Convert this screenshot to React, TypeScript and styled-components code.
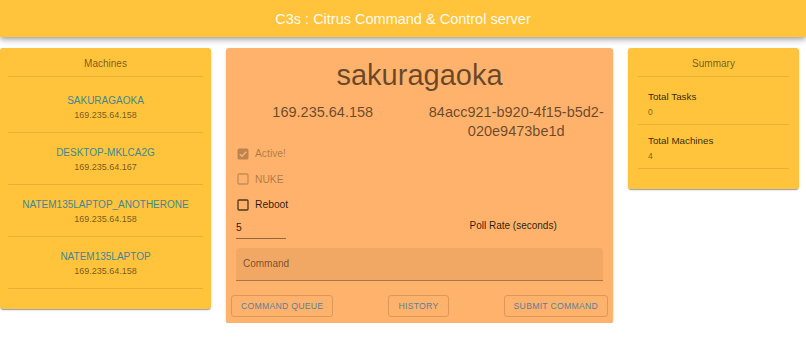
import React from 'react';
import styled, { createGlobalStyle } from 'styled-components';

const GlobalStyle = createGlobalStyle`
  *, *::before, *::after {
    box-sizing: border-box;
  }
  body {
    margin: 0;
    background: #ffffff;
    font-family: "Liberation Sans", Arial, Helvetica, sans-serif;
  }
`;

const AppBar = styled.header`
  height: 37px;
  background-color: #ffc43c;
  display: flex;
  align-items: center;
  justify-content: center;
  box-shadow: 0 2px 4px -1px rgba(0, 0, 0, 0.2), 0 4px 5px 0 rgba(0, 0, 0, 0.14),
    0 1px 10px 0 rgba(0, 0, 0, 0.12);
  color: rgba(255, 255, 255, 0.94);
  font-size: 14.5px;
`;

const Row = styled.main`
  display: flex;
  align-items: flex-start;
  padding: 11px 8px 0 0;
  gap: 15px;
`;

const Paper = styled.section<{ $bg: string; $width: number }>`
  width: ${({ $width }) => $width}px;
  flex: 0 0 auto;
  background-color: ${({ $bg }) => $bg};
  border-radius: 3px;
  box-shadow: 0 2px 1px -1px rgba(0, 0, 0, 0.2), 0 1px 1px 0 rgba(0, 0, 0, 0.14),
    0 1px 3px 0 rgba(0, 0, 0, 0.12);
`;

const SideCard = styled(Paper)<{ $inset: number }>`
  padding: 8px ${({ $inset }) => $inset}px 0;
`;

const CardTitle = styled.div`
  text-align: center;
  font-size: 10px;
  line-height: 16px;
  color: rgba(0, 0, 0, 0.56);
  padding-bottom: 4px;
  border-bottom: 1px solid rgba(0, 0, 0, 0.1);
`;

const List = styled.ul<{ $bottom: number }>`
  list-style: none;
  margin: 0;
  padding: 4px 0 ${({ $bottom }) => $bottom}px;
`;

const MachineItem = styled.li`
  text-align: center;
  padding: 12px 0 11px;
  border-bottom: 1px solid rgba(0, 0, 0, 0.1);
`;

const MachineName = styled.div`
  font-size: 10px;
  line-height: 16px;
  color: #3f8790;
`;

const MachineIp = styled.div`
  font-size: 9px;
  line-height: 12px;
  color: rgba(0, 0, 0, 0.58);
`;

const StatItem = styled.li`
  padding: 8px 10px 5px;
  border-bottom: 1px solid rgba(0, 0, 0, 0.1);
`;

const StatLabel = styled.div`
  font-size: 9.8px;
  line-height: 16px;
  color: rgba(0, 0, 0, 0.82);
`;

const StatValue = styled.div`
  font-size: 8.5px;
  line-height: 14px;
  color: rgba(0, 0, 0, 0.54);
`;

const Detail = styled(Paper)`
  display: flex;
  flex-direction: column;
  padding: 8px 0 6px;
`;

const Hostname = styled.h1`
  margin: 0;
  text-align: center;
  font-size: 29px;
  line-height: 38px;
  font-weight: 400;
  color: rgba(0, 0, 0, 0.6);
`;

const IdRow = styled.div`
  display: grid;
  grid-template-columns: 1fr 1fr;
  margin-top: 9px;
`;

const IdText = styled.div`
  text-align: center;
  font-size: 14.5px;
  line-height: 19px;
  color: rgba(0, 0, 0, 0.6);
`;

const Controls = styled.div`
  padding: 0 10px;
  display: flex;
  flex-direction: column;
`;

const CheckRow = styled.label<{ $disabled?: boolean }>`
  display: flex;
  align-items: center;
  gap: 5px;
  height: 25.5px;
  font-size: 10.3px;
  color: ${({ $disabled }) => ($disabled ? 'rgba(0, 0, 0, 0.34)' : 'rgba(0, 0, 0, 0.85)')};
`;

const PollRow = styled.div`
  display: grid;
  grid-template-columns: 1fr 1fr;
  align-items: start;
`;

const PollInput = styled.div`
  width: 50px;
  height: 21px;
  border-bottom: 1px solid rgba(0, 0, 0, 0.42);
  font-size: 10.3px;
  line-height: 20px;
  color: rgba(0, 0, 0, 0.87);
`;

const PollLabel = styled.div`
  font-size: 10px;
  line-height: 16px;
  color: rgba(0, 0, 0, 0.85);
  padding-left: 50px;
`;

const FilledField = styled.div`
  margin-top: 9px;
  height: 33px;
  background-color: rgba(0, 0, 0, 0.05);
  border-radius: 3px 3px 0 0;
  border-bottom: 1px solid rgba(0, 0, 0, 0.3);
  display: flex;
  align-items: center;
  padding-left: 7px;
  font-size: 10px;
  color: rgba(0, 0, 0, 0.55);
`;

const ButtonBar = styled.div`
  display: flex;
  justify-content: space-between;
  padding: 14px 5px 0;
`;

const OutlinedButton = styled.button`
  height: 22px;
  padding: 0 9px;
  background: transparent;
  border: 1px solid rgba(0, 0, 0, 0.14);
  border-radius: 3px;
  font-family: inherit;
  font-size: 8.7px;
  letter-spacing: 0.25px;
  text-transform: uppercase;
  color: #5a7f9a;
  cursor: pointer;
`;

type BoxProps = { checked?: boolean; color: string };

const CheckIcon: React.FC<BoxProps> = ({ checked, color }) => (
  <svg width="14" height="14" viewBox="0 0 14 14" aria-hidden="true">
    {checked ? (
      <>
        <rect x="1.5" y="1.5" width="11" height="11" rx="1.5" fill={color} />
        <path d="M3.8 7.2 L6 9.3 L10.3 4.8" stroke="#ffb26b" strokeWidth="1.4" fill="none" />
      </>
    ) : (
      <rect x="2" y="2" width="10" height="10" rx="1" stroke={color} strokeWidth="1.3" fill="none" />
    )}
  </svg>
);

const machines = [
  { name: 'SAKURAGAOKA', ip: '169.235.64.158' },
  { name: 'DESKTOP-MKLCA2G', ip: '169.235.64.167' },
  { name: 'NATEM135LAPTOP_ANOTHERONE', ip: '169.235.64.158' },
  { name: 'NATEM135LAPTOP', ip: '169.235.64.158' },
];

const App: React.FC = () => {
  return (
    <>
      <GlobalStyle />
      <AppBar>C3s : Citrus Command &amp; Control server</AppBar>
      <Row>
        <SideCard $bg="#ffc43c" $width={211} $inset={8}>
          <CardTitle>Machines</CardTitle>
          <List $bottom={20}>
            {machines.map((m) => (
              <MachineItem key={m.name}>
                <MachineName>{m.name}</MachineName>
                <MachineIp>{m.ip}</MachineIp>
              </MachineItem>
            ))}
          </List>
        </SideCard>

        <Detail $bg="#ffb26b" $width={387}>
          <Hostname>sakuragaoka</Hostname>
          <IdRow>
            <IdText>169.235.64.158</IdText>
            <IdText>84acc921-b920-4f15-b5d2-020e9473be1d</IdText>
          </IdRow>
          <Controls>
            <CheckRow $disabled>
              <CheckIcon checked color="rgba(0,0,0,0.26)" />
              Active!
            </CheckRow>
            <CheckRow $disabled>
              <CheckIcon color="rgba(0,0,0,0.22)" />
              NUKE
            </CheckRow>
            <CheckRow>
              <CheckIcon color="rgba(0,0,0,0.7)" />
              Reboot
            </CheckRow>
            <PollRow>
              <PollInput>5</PollInput>
              <PollLabel>Poll Rate (seconds)</PollLabel>
            </PollRow>
            <FilledField>Command</FilledField>
          </Controls>
          <ButtonBar>
            <OutlinedButton>Command Queue</OutlinedButton>
            <OutlinedButton>History</OutlinedButton>
            <OutlinedButton>Submit Command</OutlinedButton>
          </ButtonBar>
        </Detail>

        <SideCard $bg="#ffc43c" $width={171} $inset={10}>
          <CardTitle>Summary</CardTitle>
          <List $bottom={20}>
            <StatItem>
              <StatLabel>Total Tasks</StatLabel>
              <StatValue>0</StatValue>
            </StatItem>
            <StatItem>
              <StatLabel>Total Machines</StatLabel>
              <StatValue>4</StatValue>
            </StatItem>
          </List>
        </SideCard>
      </Row>
    </>
  );
};

export default App;
